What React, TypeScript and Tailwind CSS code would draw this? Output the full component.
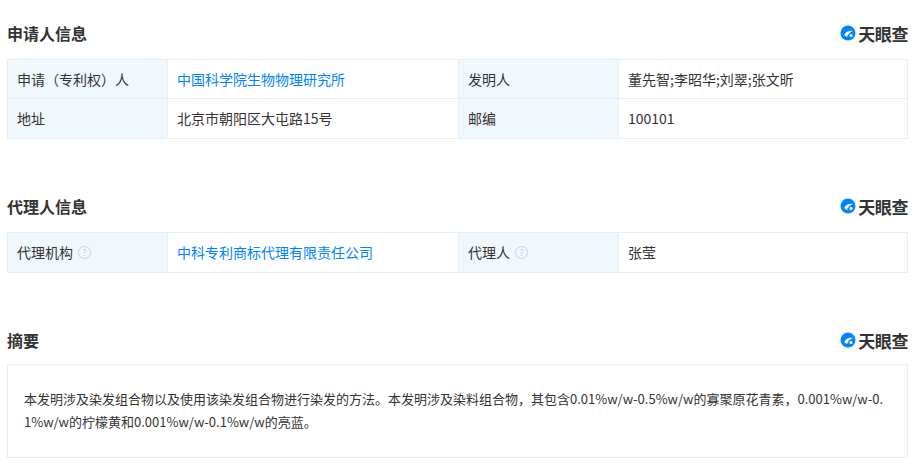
const font = { fontFamily: '"Noto Sans CJK SC", "Liberation Sans", sans-serif' }

function Logo() {
  return (
    <div className="flex items-center gap-[2px]">
      <svg width="16" height="16" viewBox="0 0 16 16">
        <circle cx="8" cy="8" r="7.5" fill="#0084ff" />
        <path d="M4 10 C6 6, 10 5, 13 6 C10 7, 8 9, 7 12 Z" fill="#fff" />
        <circle cx="11" cy="10.5" r="1.6" fill="#fff" />
      </svg>
      <span className="text-[17px] font-bold text-[#333] leading-none tracking-tight">天眼查</span>
    </div>
  )
}

function Title({ text }: { text: string }) {
  return (
    <div className="flex items-center justify-between h-[30px] pl-[7px] pr-[7px]">
      <span className="text-[16px] font-bold text-[#333]">{text}</span>
      <Logo />
    </div>
  )
}

function Help() {
  return (
    <span className="ml-[5px] inline-flex h-[13px] w-[13px] items-center justify-center rounded-full border border-[#c6d3e3] text-[9px] leading-none text-[#c6d3e3]">?</span>
  )
}

function Row({ cells, last }: { cells: React.ReactNode[]; last?: boolean }) {
  const widths = ["w-[160px]", "w-[291px]", "w-[160px]", "flex-1"]
  return (
    <div className={`flex h-[39px] ${last ? "" : "border-b border-[#e4eef6]"}`}>
      {cells.map((c, i) => (
        <div
          key={i}
          className={`${widths[i]} flex items-center px-[9px] text-[14px] text-[#333] ${i % 2 === 0 ? "bg-[#f0f7fd]" : "bg-white"} ${i < 3 ? "border-r border-[#e4eef6]" : ""}`}
        >
          {c}
        </div>
      ))}
    </div>
  )
}

const link = "text-[#0084ff]"

export default function App() {
  return (
    <div className="w-[915px] h-[465px] bg-white" style={font}>
      <div className="pt-[18px]">
        <Title text="申请人信息" />
        <div className="mx-[7px] mt-[11px] border border-[#e4eef6]">
          <Row cells={["申请（专利权）人", <span className={link}>中国科学院生物物理研究所</span>, "发明人", "董先智;李昭华;刘翠;张文昕"]} />
          <Row last cells={["地址", "北京市朝阳区大屯路15号", "邮编", "100101"]} />
        </div>
      </div>
      <div className="pt-[52px]">
        <Title text="代理人信息" />
        <div className="mx-[7px] mt-[11px] border border-[#e4eef6]">
          <Row last cells={[<>代理机构<Help /></>, <span className={link}>中科专利商标代理有限责任公司</span>, <>代理人<Help /></>, "张莹"]} />
        </div>
      </div>
      <div className="pt-[52px]">
        <Title text="摘要" />
        <div className="mx-[7px] mt-[9px] h-[94px] border border-[#e4eef6] px-[16px] pt-[22px] text-[13px] leading-[23px] text-[#333] break-all">
          本发明涉及染发组合物以及使用该染发组合物进行染发的方法。本发明涉及染料组合物，其包含0.01%w/w-0.5%w/w的寡聚原花青素，0.001%w/w-0.1%w/w的柠檬黄和0.001%w/w-0.1%w/w的亮蓝。
        </div>
      </div>
    </div>
  )
}
